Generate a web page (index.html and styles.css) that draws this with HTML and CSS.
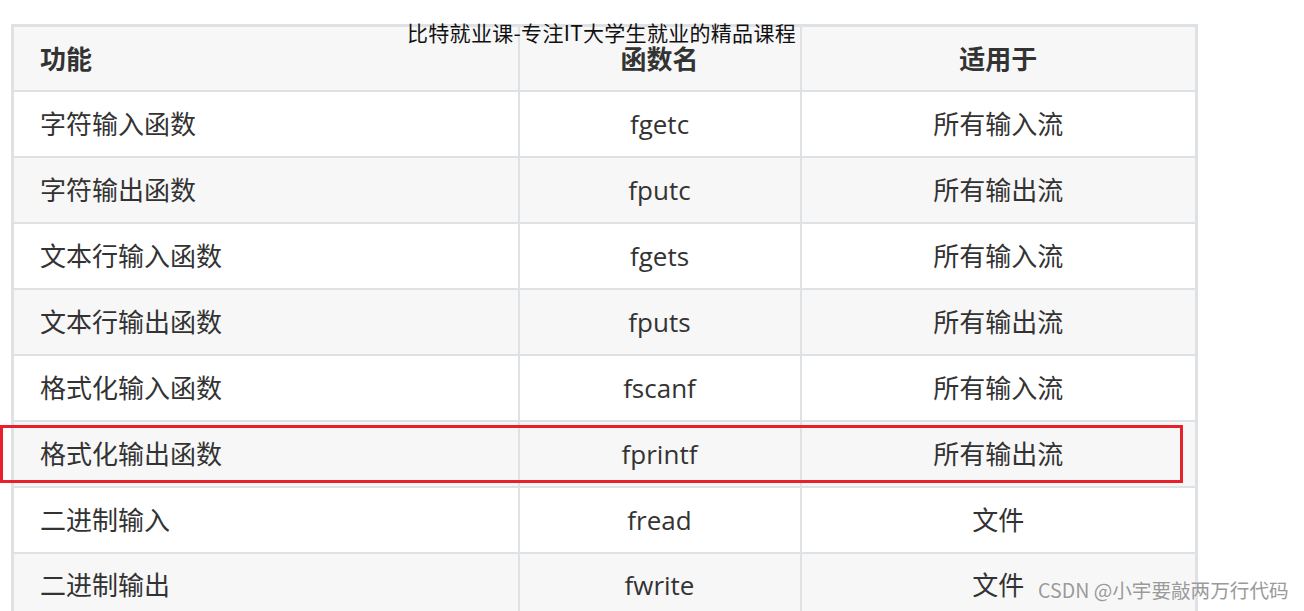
FILE: index.html
```html
<!DOCTYPE html>
<html lang="zh">
<head>
<meta charset="utf-8">
<title>文件函数</title>
<link rel="stylesheet" href="styles.css">
</head>
<body>
<div class="page">
  <table class="ftable">
    <thead>
      <tr><th class="c1 left">功能</th><th class="c2">函数名</th><th class="c3">适用于</th></tr>
    </thead>
    <tbody>
      <tr><td class="left">字符输入函数</td><td>fgetc</td><td>所有输入流</td></tr>
      <tr><td class="left">字符输出函数</td><td>fputc</td><td>所有输出流</td></tr>
      <tr><td class="left">文本行输入函数</td><td>fgets</td><td>所有输入流</td></tr>
      <tr><td class="left">文本行输出函数</td><td>fputs</td><td>所有输出流</td></tr>
      <tr><td class="left">格式化输入函数</td><td>fscanf</td><td>所有输入流</td></tr>
      <tr><td class="left">格式化输出函数</td><td>fprintf</td><td>所有输出流</td></tr>
      <tr><td class="left">二进制输入</td><td>fread</td><td>文件</td></tr>
      <tr><td class="left">二进制输出</td><td>fwrite</td><td>文件</td></tr>
    </tbody>
  </table>
  <div class="banner">比特就业课-专注IT大学生就业的精品课程</div>
  <div class="highlight"></div>
  <div class="csdn">CSDN @小宇要敲两万行代码</div>
</div>
</body>
</html>
```

FILE: styles.css
```css
html, body {
  margin: 0;
  padding: 0;
  background: #ffffff;
  overflow: hidden;
}
.page {
  position: relative;
  width: 1304px;
  height: 611px;
  padding: 24px 0 0 11px;
  box-sizing: border-box;
  font-family: "Open Sans", "Noto Sans CJK SC", sans-serif;
  color: #333333;
}
.ftable {
  border-collapse: collapse;
  border: 3px solid #dfe2e5;
  font-size: 26px;
}
.ftable th,
.ftable td {
  border: 2px solid #dfe2e5;
  height: 66px;
  padding: 0 26px;
  box-sizing: border-box;
  text-align: center;
  vertical-align: middle;
  line-height: 30px;
}
.ftable th {
  font-weight: 700;
  height: 65px;
  padding-top: 1px;
  line-height: 26px;
  background: #f7f7f7;
}
.ftable .left {
  text-align: left;
}
.ftable .c1 { width: 506px; }
.ftable .c2 { width: 282px; }
.ftable .c3 { width: 396px; }
.ftable tbody tr:nth-child(even) td {
  background: #f7f7f7;
}
.ftable tbody tr:nth-child(odd) td {
  background: #ffffff;
}
.banner {
  position: absolute;
  left: 407px;
  top: 22px;
  font-family: "Noto Sans CJK SC", sans-serif;
  font-size: 21px;
  line-height: 21px;
  color: #111111;
  letter-spacing: 0.3px;
}
.highlight {
  position: absolute;
  left: 0;
  top: 425px;
  width: 1183px;
  height: 58px;
  box-sizing: border-box;
  border: 3px solid #e8202a;
}
.csdn {
  position: absolute;
  left: 1038px;
  top: 577px;
  font-family: "Noto Sans CJK SC", sans-serif;
  font-size: 19.6px;
  line-height: 26px;
  color: #9a9a9a;
  text-shadow: 0 0 2px #ffffff;
}
```
